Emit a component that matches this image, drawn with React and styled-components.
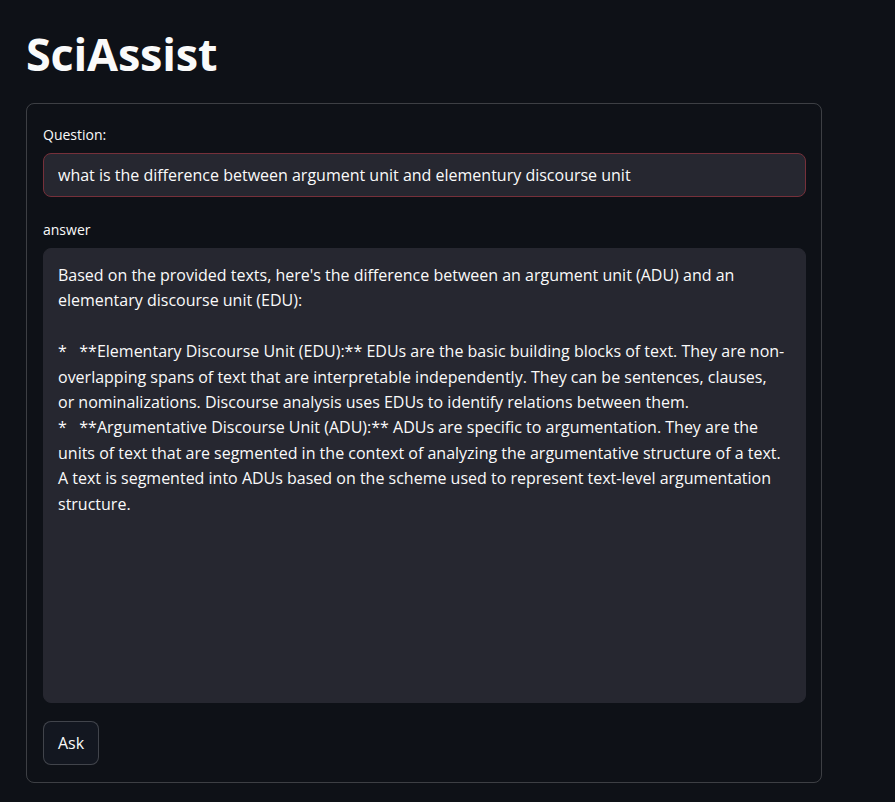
import React from 'react'
import styled, { createGlobalStyle } from 'styled-components'

const GlobalStyle = createGlobalStyle`
  html, body {
    margin: 0;
    padding: 0;
    background: #0e1117;
  }
  body {
    font-family: "Open Sans", "Noto Sans", sans-serif;
    color: #fafafa;
    min-height: 802px;
  }
  * { box-sizing: border-box; }
`

const Main = styled.main`
  padding: 27px 0 0 26px;
`

const Title = styled.h1`
  margin: 0 0 22px;
  font-size: 45px;
  line-height: 54px;
  font-weight: 700;
  color: #fafafa;
  letter-spacing: -0.2px;
`

const Form = styled.form`
  width: 796px;
  border: 1px solid rgba(250, 250, 250, 0.2);
  border-radius: 8px;
  padding: 20px 15px 17px 16px;
  display: flex;
  flex-direction: column;
`

const Field = styled.div`
  display: flex;
  flex-direction: column;
  gap: 8px;
  margin-bottom: ${p => p.$gap || 0}px;
`

const Label = styled.label`
  font-size: 14px;
  line-height: 21px;
  color: #fafafa;
`

const TextInput = styled.input`
  width: 100%;
  height: 44px;
  padding: 9px 14px;
  font-family: inherit;
  font-size: 16px;
  line-height: 24px;
  color: #fafafa;
  background: #262730;
  border: 1px solid #76303a;
  border-radius: 8px;
  outline: none;
`

/* right padding is wider so lines wrap where the original does */
const TextArea = styled.textarea`
  width: 100%;
  height: 455px;
  padding: 14px 19.5px 14px 14px;
  font-family: inherit;
  font-size: 16px;
  line-height: 25.4px;
  color: #fafafa;
  background: #262730;
  border: 1px solid #262730;
  border-radius: 8px;
  outline: none;
  resize: none;
  overflow: hidden;
  white-space: pre-wrap;
`

const Button = styled.button`
  align-self: flex-start;
  height: 44px;
  padding: 0 14px;
  font-family: inherit;
  font-size: 16px;
  color: #fafafa;
  background: #131720;
  border: 1px solid rgba(250, 250, 250, 0.2);
  border-radius: 8px;
  cursor: pointer;
`

const question = 'what is the difference between argument unit and elementury discourse unit'

const answer = `Based on the provided texts, here's the difference between an argument unit (ADU) and an elementary discourse unit (EDU):

*   **Elementary Discourse Unit (EDU):** EDUs are the basic building blocks of text. They are non-overlapping spans of text that are interpretable independently. They can be sentences, clauses, or nominalizations. Discourse analysis uses EDUs to identify relations between them.
*   **Argumentative Discourse Unit (ADU):** ADUs are specific to argumentation. They are the units of text that are segmented in the context of analyzing the argumentative structure of a text. A text is segmented into ADUs based on the scheme used to represent text-level argumentation structure.`

export default function App() {
  return (
    <>
      <GlobalStyle />
      <Main>
        <Title>SciAssist</Title>
        <Form onSubmit={e => e.preventDefault()}>
          <Field $gap={22}>
            <Label htmlFor="question">Question:</Label>
            <TextInput id="question" readOnly value={question} />
          </Field>
          <Field $gap={18}>
            <Label htmlFor="answer">answer</Label>
            <TextArea id="answer" readOnly value={answer} />
          </Field>
          <Button type="submit">Ask</Button>
        </Form>
      </Main>
    </>
  )
}
